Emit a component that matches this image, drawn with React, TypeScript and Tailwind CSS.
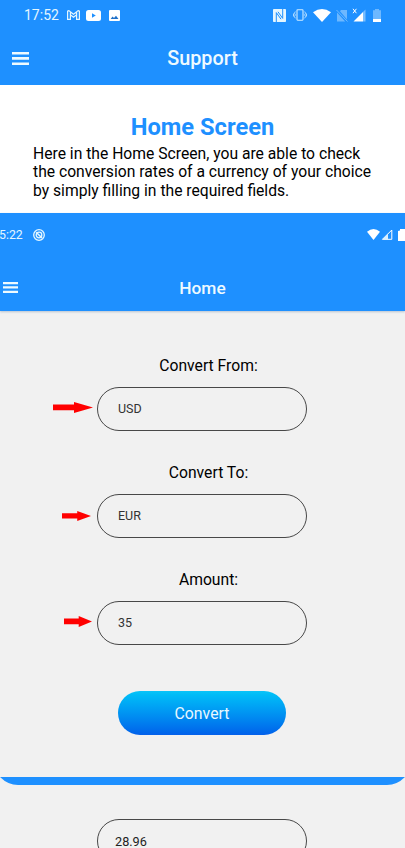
import type { ReactNode } from 'react';

type MenuProps = { className: string };

function MenuIcon({ className }: MenuProps) {
  return (
    <svg viewBox="0 0 17 13" preserveAspectRatio="none" className={className} fill="currentColor">
      <path d="M0 0h17v2.6H0zM0 5.1h17v2.7H0zM0 10.4h17V13H0z" />
    </svg>
  );
}

function StatusBar() {
  return (
    <div className="flex h-[30px] items-center pr-6 pl-6">
      <span className="w-[43px] text-[14px] leading-[30px] text-[#e4f6ff]">17:52</span>
      <svg viewBox="0 0 13 10" className="h-[10px] w-[13px] shrink-0" fill="none" stroke="#e4f6ff" strokeWidth="1.2">
        <path d="M.6 9.4V1.2l1.2-.6 4.7 3.6L11.2.6l1.2.6v8.2H9.6V4.8L6.5 7.2 3.4 4.8v4.6zM3.4 4.8V2M9.6 4.8V2" />
      </svg>
      <svg viewBox="0 0 15 11" className="ml-[6px] h-[11px] w-[15px] shrink-0">
        <rect width="15" height="11" rx="2.5" fill="#fff" />
        <path d="M6 3.3 9.8 5.5 6 7.7z" fill="#1e90ff" />
      </svg>
      <svg viewBox="0 0 11 11" className="ml-2 h-[11px] w-[11px] shrink-0">
        <rect width="11" height="11" rx="1" fill="#fff" />
        <path d="M1.6 9 3.6 6.4 5 8 7 5.7 9.5 9z" fill="#1e70c8" />
      </svg>
      <div className="ml-auto flex items-center">
        <svg viewBox="0 0 13 13" className="h-[13px] w-[13px]">
          <rect width="13" height="13" rx=".8" fill="#e4f6ff" />
          <path d="M3.3 13V3.6L8 10.2M9.700 0v9.400L5 2.800" fill="none" stroke="#1e90ff" strokeWidth="1" />
        </svg>
        <svg viewBox="0 0 14 12" className="ml-[7px] h-[12px] w-[14px]" fill="none" stroke="#d0ecff" strokeWidth="1.1">
          <rect x="4" y=".8" width="6" height="10.4" rx=".6" />
          <path d="m2.3 2.5-.8 1.7.8 1.700-.8 1.700.8 1.700M11.700 2.500l.8 1.700-.8 1.700.8 1.700-.8 1.700M.5 4.500v3M13.500 4.500v3" strokeWidth=".8" />
        </svg>
        <svg viewBox="0 0 18 13" className="ml-[6px] h-[13px] w-[18px]">
          <path d="M0 3.2Q9-3.2 18 3.2L9 13z" fill="#fff" />
        </svg>
        <svg viewBox="0 0 12 13" className="ml-[5px] h-[13px] w-[12px]">
          <path d="M5 1h6v9.500L4 2.200zM1 3.500 9.200 12.500H1z" fill="#6db8ff" />
          <path d="M.5 1 11.500 12.500" stroke="#6db8ff" strokeWidth="1" />
        </svg>
        <svg viewBox="0 0 14 14" className="ml-[4px] h-[14px] w-[14px]">
          <path d="M13.5 1.5v12H11V4z" fill="#78beff" />
          <path d="M1.5 13.5 11 4v9.5z" fill="#fff" />
          <path d="m1 .8 3.400 4.400M4.400.8 1 5.200" stroke="#fff" strokeWidth="1" />
        </svg>
        <svg viewBox="0 0 8 13" className="ml-[7px] h-[13px] w-[8px]">
          <path d="M2 0h4v1.200h2V10H0V1.200h2z" fill="#6db8ff" />
          <path d="M0 10h8v3H0z" fill="#fff" />
        </svg>
      </div>
    </div>
  );
}

function InnerStatusBar() {
  return (
    <div className="flex h-[43px] items-center">
      <span className="-ml-px w-[34px] pt-[2px] text-[12.3px] text-[#e4f6ff]">5:22</span>
      <svg viewBox="0 0 12 12" className="h-[12px] w-[12px]" fill="none" stroke="#e4f6ff">
        <circle cx="6" cy="6" r="5.3" strokeWidth="1.3" />
        <circle cx="6" cy="6" r="2.8" strokeWidth="1.3" />
        <path d="m3.2 3.2 5.8 5.8" strokeWidth="1.5" />
      </svg>
      <div className="ml-auto flex items-center">
        <svg viewBox="0 0 13 11" className="h-[11px] w-[13px]">
          <path d="M0 2.7Q6.5-2.7 13 2.7L6.5 11z" fill="#fff" />
        </svg>
        <svg viewBox="0 0 12 11" className="ml-[1px] h-[11px] w-[12px]">
          <path d="M1.5 10.3 10.8 1v9.3z" fill="none" stroke="#fff" />
          <path d="M1 10.5 7 4.5v6z" fill="#d9efff" />
        </svg>
        <svg viewBox="0 0 7 12" className="ml-[5px] h-[12px] w-[7px]">
          <path d="M2 0h5v12H0V2l2-.5z" fill="#fff" />
        </svg>
      </div>
    </div>
  );
}

type FieldProps = { label: string; value: string; arrow: ReactNode };

function Field({ label, value, arrow }: FieldProps) {
  return (
    <div className="flex h-[107px] flex-col items-center">
      <label className="h-[33px] pl-[13px] text-[15.7px] leading-[23px] text-black">{label}</label>
      <div className="relative flex h-[44px] w-[210px] items-center rounded-full border border-[#484848] pl-5 text-[12.5px] text-[#333]">
        {value}
        {arrow}
      </div>
    </div>
  );
}

function Arrow({ className }: { className: string }) {
  return (
    <svg viewBox="0 0 40 10" preserveAspectRatio="none" className={className} fill="#f00">
      <path d="M0 2.3h21V0L40 5 21 10V7.500H0z" />
    </svg>
  );
}

export default function App() {
  return (
    <div className="h-[848px] w-full overflow-hidden bg-[#f1f1f1] font-['Roboto',sans-serif]">
      <header className="h-[85px] bg-[#1e90ff] text-white">
        <StatusBar />
        <div className="grid h-[57px] grid-cols-[1fr_auto_1fr] items-center">
          <MenuIcon className="ml-3 h-[13px] w-[17px] text-[#eefaff]" />
          <h1 className="text-[19.8px] font-medium text-[#eefaff]">Support</h1>
        </div>
      </header>

      <section className="h-[128px] bg-white pt-[27px]">
        <h2 className="text-center text-[23.7px] leading-[30px] font-bold text-[#1e90ff]">Home Screen</h2>
        <p className="ml-[33px] pt-[2.500px] text-[15.68px] leading-[18.5px] whitespace-nowrap text-black">
          Here in the Home Screen, you are able to check
          <br />
          the conversion rates of a currency of your choice
          <br />
          by simply filling in the required fields.
        </p>
      </section>

      <section className="h-[98px] bg-[#1e90ff] shadow-[0_1px_2px_#b8c4d0]">
        <InnerStatusBar />
        <div className="grid h-[63px] grid-cols-[1fr_auto_1fr] items-center">
          <MenuIcon className="ml-[3px] h-[11px] w-[15px] text-[#eefaff]" />
          <h2 className="pt-[2px] text-[17.3px] font-medium text-[#eefaff]">Home</h2>
        </div>
      </section>

      <main className="h-[466px] pt-[43px] pr-px">
        <Field label="Convert From:" value="USD" arrow={<Arrow className="absolute top-[14px] -left-[45px] h-[11px] w-[40px]" />} />
        <Field label="Convert To:" value="EUR" arrow={<Arrow className="absolute top-[16px] -left-[36px] h-[10px] w-[29px]" />} />
        <Field label="Amount:" value="35" arrow={<Arrow className="absolute top-[14px] -left-[34px] h-[11px] w-[28px]" />} />
        <button className="mx-auto mt-4 block h-[44px] w-[168px] rounded-full bg-linear-to-b from-[#0ac4f8] to-[#0560ea] pt-[2px] text-[15.8px] text-[#e8f8ff]">
          Convert
        </button>
      </main>

      <svg viewBox="0 0 405 8" className="block h-[8px] w-full">
        <path d="M0 0H405Q397 8 387 8H18Q8 8 0 0z" fill="#1e90ff" />
      </svg>

      <div className="pr-px">
        <div className="mx-auto mt-[34px] flex h-[44px] w-[210px] items-center rounded-full border border-[#484848] pt-px pl-[17px] text-[12.7px] text-[#222]">
          28.96
        </div>
      </div>
    </div>
  );
}
